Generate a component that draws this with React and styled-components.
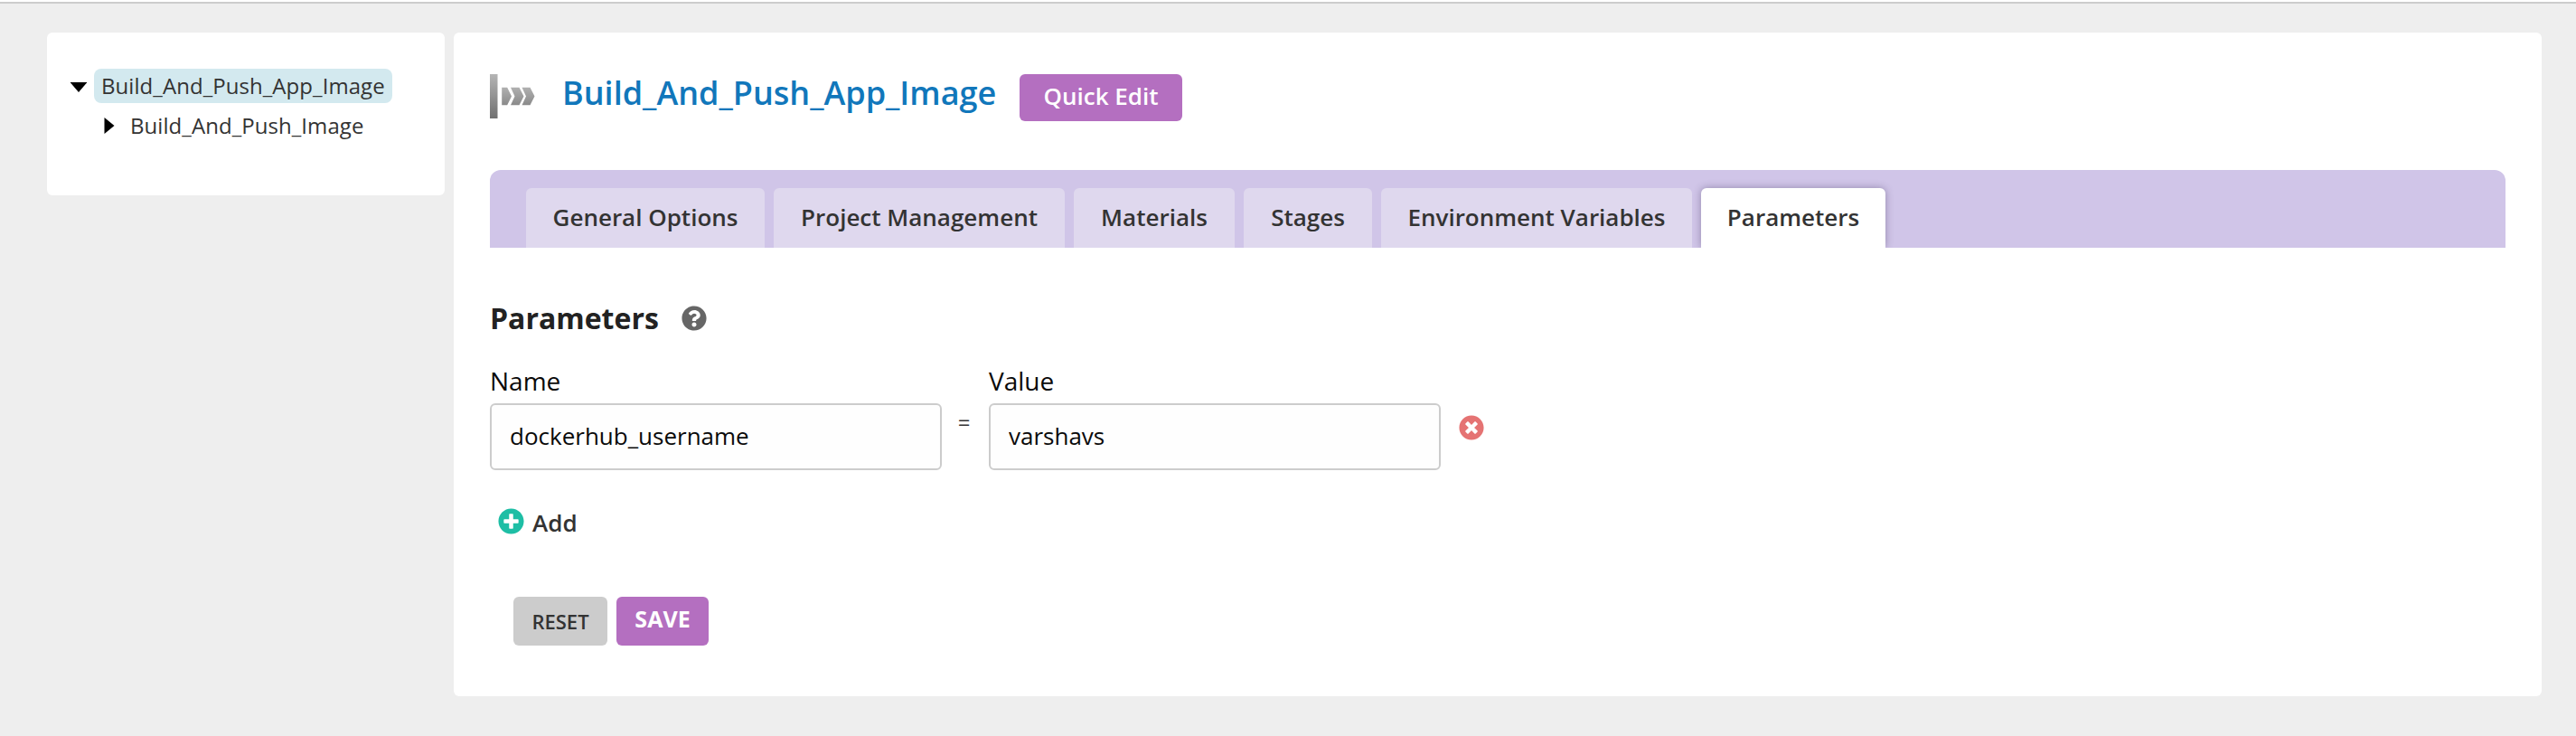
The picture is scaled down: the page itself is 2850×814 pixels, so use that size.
import React from "react";
import styled, { createGlobalStyle } from "styled-components";
import { FaPlusCircle, FaQuestionCircle, FaTimesCircle } from "react-icons/fa";

const GlobalStyle = createGlobalStyle`
  *, *::before, *::after { box-sizing: border-box; }
  body {
    margin: 0;
    background: #eee;
    color: #333;
    font-family: "Open Sans", "Noto Sans", sans-serif;
    font-size: 26px;
  }
  button, input { font-family: inherit; margin: 0; }
`;

const Page = styled.div`
  min-height: 814px;
  background: #eee;
  border-top: 2px solid #fff;
`;

const Body = styled.div`
  display: flex;
  align-items: flex-start;
  gap: 10px;
  border-top: 2px solid #ccc;
  padding: 32px 38px 0 52px;
`;

const Sidebar = styled.aside`
  width: 440px;
  height: 180px;
  padding: 40px 26px;
  background: #fff;
  border-radius: 6px;
`;

const TreeRow = styled.div`
  display: flex;
  align-items: center;
  height: 38px;
  margin-bottom: 6px;
  padding-left: ${(p) => p.$indent || 0}px;
`;

const Arrow = styled.svg`
  display: block;
  flex: none;
  width: 18px;
  height: 18px;
`;

const NodeLabel = styled.span`
  height: 38px;
  margin-left: ${(p) => (p.$selected ? 8 : 6)}px;
  padding: 0 8px;
  border-radius: 8px;
  background: ${(p) => (p.$selected ? "#d3e9ef" : "transparent")};
  font-size: 24px;
  letter-spacing: 0.06px;
  line-height: 38px;
  white-space: nowrap;
`;

const Main = styled.main`
  flex: 1;
  height: 734px;
  padding: 40px;
  background: #fff;
  border-radius: 6px;
`;

const Header = styled.header`
  display: flex;
  align-items: flex-start;
  height: 112px;
`;

const PipelineIcon = styled.svg`
  display: block;
  flex: none;
  width: 52px;
  height: 52px;
  margin-top: 5px;
`;

const Title = styled.h1`
  flex: none;
  width: 534px;
  margin: 0;
  padding-left: 28px;
  color: #1177bb;
  font-size: 36px;
  font-weight: 600;
  line-height: 54px;
  white-space: nowrap;
`;

const Button = styled.button`
  width: ${(p) => p.$width}px;
  height: ${(p) => p.$height}px;
  margin-top: ${(p) => p.$top || 0}px;
  padding: 0 0 ${(p) => p.$lift || 0}px;
  border: 0;
  border-radius: 6px;
  background: ${(p) => (p.$secondary ? "#ccc" : "#b46fc0")};
  color: ${(p) => (p.$secondary ? "#333" : "#fff")};
  font-size: ${(p) => (p.$secondary ? 22 : 26)}px;
  font-weight: 600;
`;

const TabBar = styled.nav`
  display: flex;
  align-items: flex-end;
  gap: 10px;
  height: 86px;
  padding: 20px 40px 0;
  overflow: hidden;
  background: #d0c5e8;
  border-radius: 12px 12px 0 0;
`;

const Tab = styled.a`
  width: ${(p) => p.$width}px;
  height: 66px;
  border-radius: 6px 6px 0 0;
  background: ${(p) => (p.$active ? "#fff" : "#dfd8ee")};
  box-shadow: ${(p) => (p.$active ? "0 0 8px rgba(70, 60, 100, 0.45)" : "none")};
  font-weight: 600;
  line-height: 64px;
  text-align: center;
  white-space: nowrap;
`;

const SectionTitle = styled.h2`
  display: flex;
  align-items: center;
  gap: 25px;
  height: 44px;
  margin: 56px 0 0;
  color: #222;
  font-size: 32px;
  font-weight: 700;
  line-height: 44px;

  svg { width: 28px; height: 28px; color: #666; }
`;

const ParameterRow = styled.div`
  display: flex;
  height: 116px;
  margin-top: 30px;
`;

const Field = styled.label`
  display: flex;
  flex-direction: column;
  gap: 8px;
  width: 500px;
  color: #0a0a0a;
  font-size: 28px;
  line-height: 34px;
`;

const Input = styled.input`
  height: 74px;
  padding: 0 20px 2px;
  border: 2px solid #ccc;
  border-radius: 6px;
  background: #fefefe;
  color: #0a0a0a;
  font-size: 26px;
`;

const Equals = styled.span`
  width: 52px;
  padding: 48px 3px 0 0;
  font-size: 24px;
  line-height: 30px;
  text-align: center;
`;

const DeleteButton = styled.button`
  width: 28px;
  height: 28px;
  margin: 55px 0 0 20px;
  padding: 0;
  border: 0;
  background: none;
  color: #e57373;

  svg { display: block; width: 28px; height: 28px; }
`;

const AddButton = styled.button`
  display: flex;
  align-items: center;
  gap: 9px;
  height: 40px;
  margin-top: 38px;
  padding: 0 0 0 9px;
  border: 0;
  background: none;
  color: #333;
  font-size: 26px;
  font-weight: 600;

  svg { width: 29px; height: 29px; margin-bottom: 3px; color: #1ebea5; }
`;

const Actions = styled.div`
  display: flex;
  gap: 10px;
  margin-top: 62px;
  padding-left: 26px;
`;

const SaveButton = styled(Button)`
  font-size: 25px;
  font-weight: 700;
`;

const tabs = [
  ["General Options", 264],
  ["Project Management", 322],
  ["Materials", 178],
  ["Stages", 142],
  ["Environment Variables", 344],
  ["Parameters", 204],
];

export default function App() {
  return (
    <Page>
      <GlobalStyle />
      <Body>
        <Sidebar>
          <TreeRow>
            <Arrow viewBox="0 0 18 18"><path d="M-0.5 5h19L9 16z" fill="#000" /></Arrow>
            <NodeLabel $selected>Build_And_Push_App_Image</NodeLabel>
          </TreeRow>
          <TreeRow $indent={34}>
            <Arrow viewBox="0 0 18 18"><path d="M3.5 0v18l11-9z" fill="#000" /></Arrow>
            <NodeLabel>Build_And_Push_Image</NodeLabel>
          </TreeRow>
        </Sidebar>
        <Main>
          <Header>
            <PipelineIcon viewBox="0 0 52 52" aria-hidden="true">
              <defs>
                <linearGradient id="bar" x1="0" y1="0" x2="0" y2="1">
                  <stop offset="0" stopColor="#b5b5b5" />
                  <stop offset="1" stopColor="#707070" />
                </linearGradient>
                <linearGradient id="chevron" x1="0" y1="0" x2="0" y2="1">
                  <stop offset="0" stopColor="#b0b0b0" />
                  <stop offset="1" stopColor="#8a8a8a" />
                </linearGradient>
              </defs>
              <rect x="0" y="1" width="8.5" height="49" fill="url(#bar)" />
              <path d="M13.2 15.8h6l4.8 9.7-4.8 9.7h-6z M23 15.8h9.5l5 9.7-5 9.7h-9.5l4.5-9.7z M35.5 15.8h9l5 9.7-5 9.7h-9l4.5-9.7z" fill="url(#chevron)" />
            </PipelineIcon>
            <Title>Build_And_Push_App_Image</Title>
            <Button $width={180} $height={52} $top={6} $lift={4}>Quick Edit</Button>
          </Header>
          <TabBar>
            {tabs.map(([label, width]) => (
              <Tab key={label} $width={width} $active={label === "Parameters"}>{label}</Tab>
            ))}
          </TabBar>
          <SectionTitle>Parameters <FaQuestionCircle /></SectionTitle>
          <ParameterRow>
            <Field>Name<Input defaultValue="dockerhub_username" /></Field>
            <Equals>=</Equals>
            <Field>Value<Input defaultValue="varshavs" /></Field>
            <DeleteButton aria-label="Delete"><FaTimesCircle /></DeleteButton>
          </ParameterRow>
          <AddButton><FaPlusCircle />Add</AddButton>
          <Actions>
            <Button $secondary $width={104} $height={54}>RESET</Button>
            <SaveButton $width={102} $height={54} $lift={6}>SAVE</SaveButton>
          </Actions>
        </Main>
      </Body>
    </Page>
  );
}
